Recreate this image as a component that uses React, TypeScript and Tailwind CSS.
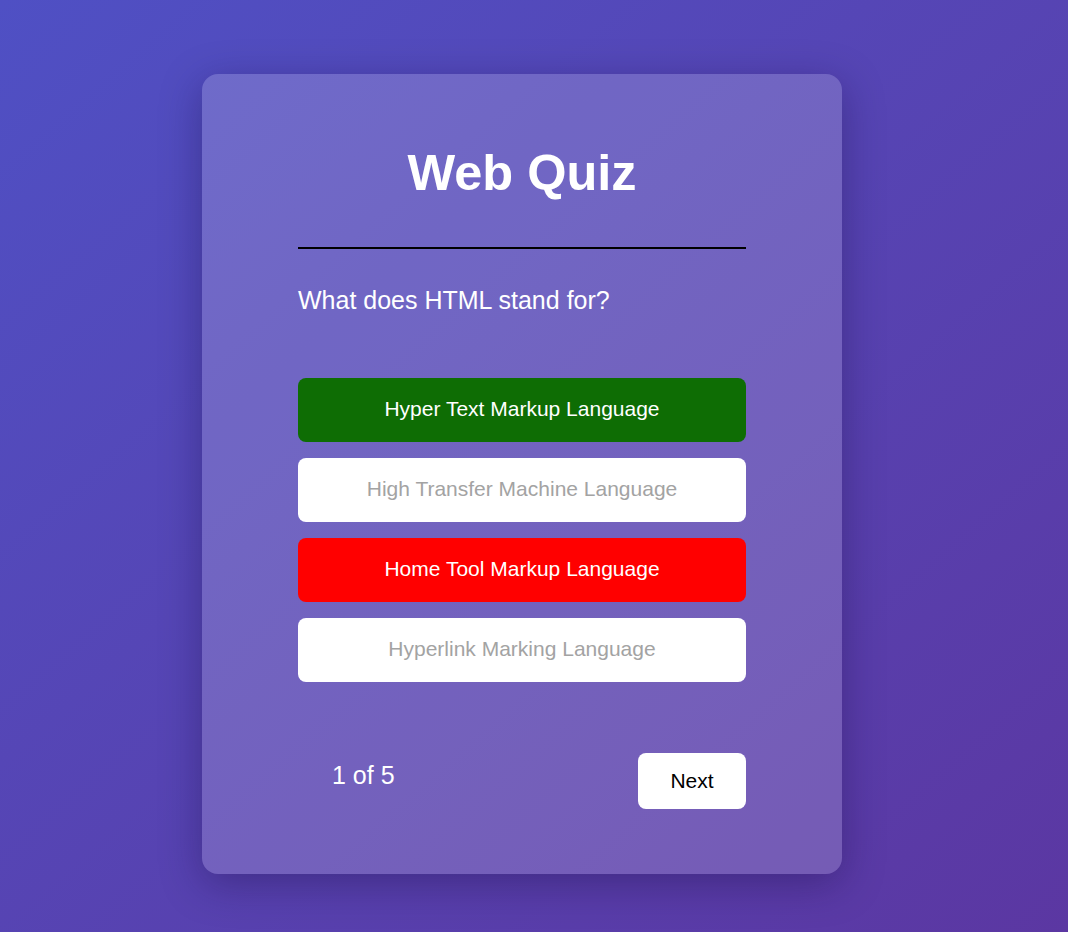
import { useState } from "react";

type Answer = {
  text: string;
  state: "correct" | "wrong" | "idle";
};

const answers: Answer[] = [
  { text: "Hyper Text Markup Language", state: "correct" },
  { text: "High Transfer Machine Language", state: "idle" },
  { text: "Home Tool Markup Language", state: "wrong" },
  { text: "Hyperlink Marking Language", state: "idle" },
];

const stateClass: Record<Answer["state"], string> = {
  correct: "bg-[#0e6d04] text-white",
  wrong: "bg-[#ff0000] text-white",
  idle: "bg-white text-[#a3a3a3]",
};

export default function App() {
  const [current] = useState(1);

  return (
    <div
      className="min-h-[932px] w-full bg-gradient-to-br from-[#4f50c4] to-[#5b37a2] flex justify-center pr-[24px] pt-[74px]"
      style={{ fontFamily: '"Liberation Sans", Arial, sans-serif' }}
    >
      <div className="w-[640px] h-[800px] rounded-2xl bg-white/[0.17] shadow-[0_10px_40px_rgba(20,10,60,0.35)] px-[96px] pt-[70px] pb-[65px] flex flex-col">
        <h1 className="text-[50.5px] leading-[58px] font-bold text-white text-center">
          Web Quiz
        </h1>
        <div className="mt-[45px] h-[3px] bg-black" />
        <p className="mt-[37px] text-[25px] leading-[29px] text-white">
          What does HTML stand for?
        </p>

        <div className="mt-[63px] flex flex-col gap-4">
          {answers.map((a) => (
            <button
              key={a.text}
              className={`h-16 w-full rounded-lg text-[21px] pb-[2px] ${stateClass[a.state]}`}
            >
              {a.text}
            </button>
          ))}
        </div>

        <div className="mt-[71px] flex items-start justify-between">
          <span className="pl-[34px] pt-[8px] text-[25px] leading-[29px] text-white">
            {current} of 5
          </span>
          <button className="w-[108px] h-14 rounded-lg bg-white text-black text-[21px]">
            Next
          </button>
        </div>
      </div>
    </div>
  );
}
